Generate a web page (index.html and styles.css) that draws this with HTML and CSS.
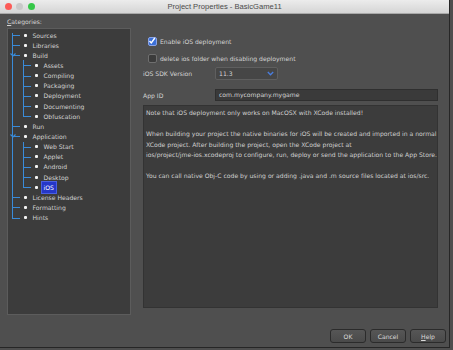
FILE: index.html
```html
<!doctype html>
<html>
<head>
    <meta http-equiv="Content-Type" content="text/html; charset=UTF-8" />
    <title>Project Properties - BasicGame11</title>
    <link rel="stylesheet" href="styles.css">
</head>
<body>
<div class="window">

    <div class="titlebar">
        <div class="lights">
            <span class="light red"></span>
            <span class="light idle"></span>
            <span class="light green"></span>
        </div>
        <div class="title">Project Properties - BasicGame11</div>
        <div></div>
    </div>

    <div class="content">
        <div class="categories"><u>C</u>ategories:</div>

        <div class="panes">
            <!-- category tree -->
            <div class="tree">
                <ul class="nodes">
                    <li><div class="row"><span class="dot"></span><span class="name">Sources</span></div></li>
                    <li><div class="row"><span class="dot"></span><span class="name">Libraries</span></div></li>
                    <li class="open">
                        <svg class="toggle" width="6" height="4" viewBox="0 0 6 4"><polyline points="0.5,0.5 3,3 5.5,0.5" /></svg>
                        <div class="row"><span class="dot"></span><span class="name">Build</span></div>
                        <ul class="nodes">
                            <li><div class="row"><span class="dot"></span><span class="name">Assets</span></div></li>
                            <li><div class="row"><span class="dot"></span><span class="name">Compiling</span></div></li>
                            <li><div class="row"><span class="dot"></span><span class="name">Packaging</span></div></li>
                            <li><div class="row"><span class="dot"></span><span class="name">Deployment</span></div></li>
                            <li><div class="row"><span class="dot"></span><span class="name">Documenting</span></div></li>
                            <li><div class="row"><span class="dot"></span><span class="name">Obfuscation</span></div></li>
                        </ul>
                    </li>
                    <li><div class="row"><span class="dot"></span><span class="name">Run</span></div></li>
                    <li class="open">
                        <svg class="toggle" width="6" height="4" viewBox="0 0 6 4"><polyline points="0.5,0.5 3,3 5.5,0.5" /></svg>
                        <div class="row"><span class="dot"></span><span class="name">Application</span></div>
                        <ul class="nodes">
                            <li><div class="row"><span class="dot"></span><span class="name">Web Start</span></div></li>
                            <li><div class="row"><span class="dot"></span><span class="name">Applet</span></div></li>
                            <li><div class="row"><span class="dot"></span><span class="name">Android</span></div></li>
                            <li><div class="row"><span class="dot"></span><span class="name">Desktop</span></div></li>
                            <li><div class="row sel"><span class="dot"></span><span class="name">iOS</span></div></li>
                        </ul>
                    </li>
                    <li><div class="row"><span class="dot"></span><span class="name">License Headers</span></div></li>
                    <li><div class="row"><span class="dot"></span><span class="name">Formatting</span></div></li>
                    <li><div class="row"><span class="dot"></span><span class="name">Hints</span></div></li>
                </ul>
            </div>

            <!-- iOS settings -->
            <div class="form">
                <div class="check first">
                    <span class="box on">
                        <svg width="8" height="8" viewBox="0 0 8 8"><polyline points="1.5,4 3.3,6 6.8,1" /></svg>
                    </span>
                    Enable iOS deployment
                </div>
                <div class="check second">
                    <span class="box"></span>
                    delete ios folder when disabling deployment
                </div>

                <div class="field sdk">
                    <span class="field-label">iOS SDK Version</span>
                    <div class="combo">
                        <span>11.3</span>
                        <svg width="7" height="5" viewBox="0 0 7 5"><polyline points="0.8,1 3.5,3.8 6.2,1" /></svg>
                    </div>
                </div>

                <div class="field appid">
                    <span class="field-label">App ID</span>
                    <div class="input">com.mycompany.mygame</div>
                </div>

                <div class="notes">
                    Note that iOS deployment only works on MacOSX with XCode installed!<br>
                    <br>
                    When building your project the native binaries for iOS will be created and imported in a normal<br>
                    XCode project. After building the project, open the XCode project at<br>
                    ios/project/jme-ios.xcodeproj to configure, run, deploy or send the application to the App Store.<br>
                    <br>
                    You can call native Obj-C code by using or adding .java and .m source files located at ios/src.
                </div>
            </div>
        </div>

        <div class="buttons">
            <button>OK</button>
            <button>Cancel</button>
            <button><u>H</u>elp</button>
        </div>
    </div>

</div>
</body>
</html>
```

FILE: styles.css
```css
body {
    margin: 0;
    background: #4e4e4e;
    font-family: "DejaVu Sans", sans-serif;
    font-size: 6.1px;
    color: #d4d4d4;
}
.window {
    width: 449px;
    height: 347px;
    background: #4f4f4f;
    border-right: 1px solid #262626;
    border-bottom: 1px solid #262626;
    display: flex;
    flex-direction: column;
}

/* title bar */
.titlebar {
    height: 13px;
    border-bottom: 1px solid #a9a9a9;
    background: linear-gradient(#ececec, #d5d5d5);
    display: grid;
    grid-template-columns: 1fr auto 1fr;
    align-items: center;
}
.lights {
    display: flex;
    gap: 4.5px;
    padding-left: 4.5px;
}
.light {
    width: 7px;
    height: 7px;
    border-radius: 50%;
}
.red { background: #fc5b57; }
.idle { background: #c9c9c9; }
.green { background: #35c748; }
.title {
    font-family: "Liberation Sans", sans-serif;
    font-size: 7.6px;
    color: #4a4a4a;
}

.content {
    padding-left: 7px;
    display: flex;
    flex-direction: column;
}
.categories {
    height: 14px;
    line-height: 15px;
}
.panes {
    display: flex;
    height: 287px;
}

/* tree */
.tree {
    width: 122px;
    border: 1px solid #5c5c5c;
    background: #3c3c3c;
}
.nodes {
    list-style: none;
    margin: 0;
    padding: 0 0 0 11px;
}
.tree > .nodes {
    padding: 1px 0 0 4px;
}
.nodes li {
    position: relative;
}
.nodes li::before {
    content: "";
    position: absolute;
    left: 0;
    top: 0;
    bottom: 0;
    border-left: 1px solid #3a8bd8;
}
.tree > .nodes > li:first-child::before {
    top: 3px;
}
.nodes li:last-child::before {
    bottom: auto;
    height: 5px;
}
.nodes li::after {
    content: "";
    position: absolute;
    left: 0;
    top: 5px;
    width: 8px;
    border-top: 1px solid #3a8bd8;
}
.toggle {
    position: absolute;
    left: -2.5px;
    top: 3px;
    z-index: 1;
    fill: none;
    stroke: #3a8bd8;
    stroke-width: 1.2;
}
.row {
    display: flex;
    align-items: center;
    height: 10.15px;
    padding-left: 12px;
    gap: 5.5px;
}
.dot {
    width: 3px;
    height: 3px;
    border-radius: 1px;
    background: #f2f2f2;
}
.name {
    color: #d2d2d2;
    line-height: 9px;
}
.sel .name {
    background: #2537c8;
    color: #ffffff;
    padding: 1px 2px;
    margin-left: -2px;
    outline: 1px solid #4a5fe0;
}

/* form */
.form {
    margin-left: 12px;
    width: 295px;
    display: flex;
    flex-direction: column;
}
.check {
    display: flex;
    align-items: center;
    gap: 3px;
    height: 10px;
    margin-left: 5px;
}
.check.first { margin-top: 8px; }
.check.second { margin-top: 7px; }
.box {
    width: 9px;
    height: 9px;
    box-sizing: border-box;
    border: 1px solid #6f6f6f;
    border-radius: 2px;
    background: #3b3b3b;
    display: flex;
}
.box.on {
    background: #3b6fd6;
    border-color: #8aa4e6;
}
.box svg {
    fill: none;
    stroke: #ffffff;
    stroke-width: 1.4;
    margin: -1px 0 0 -1px;
}
.field {
    display: flex;
    align-items: center;
}
.field.sdk { margin-top: 4px; }
.field.appid { margin-top: 9px; }
.field-label {
    width: 72px;
}
.combo {
    width: 63px;
    height: 13px;
    box-sizing: border-box;
    border: 1px solid #5f5f5f;
    border-radius: 2px;
    background: #464646;
    display: flex;
    align-items: center;
    justify-content: space-between;
    padding: 0 3px 0 3px;
}
.combo svg {
    fill: none;
    stroke: #4a7ee0;
    stroke-width: 1.3;
}
.input {
    flex: 1;
    height: 12px;
    box-sizing: border-box;
    border: 1px solid #2f2f2f;
    background: #3a3a3a;
    padding-left: 3px;
    line-height: 10px;
}
.notes {
    margin-top: 4px;
    margin-bottom: 7px;
    flex: 1;
    border: 1px solid #333333;
    background: #3c3c3c;
    padding: 2px 2px;
    line-height: 10.5px;
    white-space: nowrap;
    color: #d0d0d0;
}

/* buttons */
.buttons {
    display: flex;
    justify-content: flex-end;
    gap: 4px;
    padding: 14px 3px 0 0;
}
.buttons button {
    width: 36px;
    height: 14px;
    padding: 0;
    font-family: "DejaVu Sans", sans-serif;
    font-size: 6.1px;
    color: #dadada;
    background: linear-gradient(#565656, #4a4a4a);
    border: 1px solid #2b2b2b;
    border-radius: 3px;
}
```
